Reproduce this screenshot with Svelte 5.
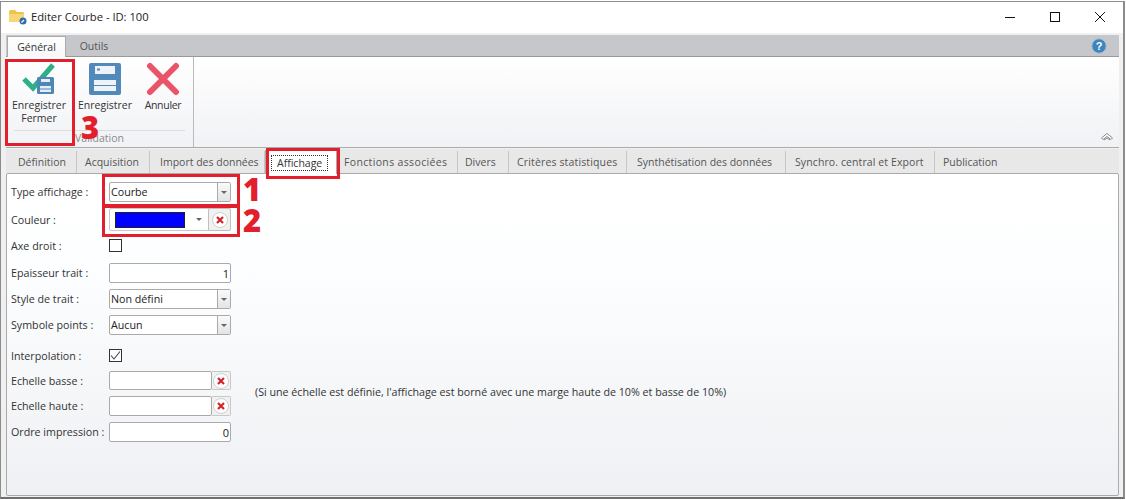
<script>
  // width and pad read off the separators, the text does not sit the same way in every tab
  const tabs = [
    { label: "Définition", width: 71, pad: 12 },
    { label: "Acquisition", width: 73, pad: 8 },
    { label: "Import des données", width: 115, pad: 10 },
    { label: "Affichage", width: 72, pad: 5 },
    { label: "Fonctions associées", width: 121, pad: 7, spacing: 0.35 },
    { label: "Divers", width: 51, pad: 7 },
    { label: "Critères statistiques", width: 118, pad: 8, spacing: 0.15 },
    { label: "Synthétisation des données", width: 159, pad: 10 },
    { label: "Synchro. central et Export", width: 149, pad: 9, spacing: 0.1 },
    { label: "Publication", width: 80, pad: 8 },
  ];
</script>

{#snippet clearIcon()}
  <span class="clear-dot">
    <svg width="10" height="10" viewBox="0 0 10 10"><path d="M2 2 L8 8 M8 2 L2 8" stroke="#d4232b" stroke-width="2.2" /></svg>
  </span>
{/snippet}

<div class="window">
  <header class="titlebar">
    <svg class="folder" width="18" height="16" viewBox="0 0 18 16">
      <path d="M0 3 Q0 1 2 1 H6 L8 3 H14 Q15 3 15 5 V13 H1 Q0 13 0 12 Z" fill="#f0c24a" />
      <path d="M0 5 H15 V13 H1 Q0 13 0 12 Z" fill="#f6d679" />
      <circle cx="14" cy="12" r="3.5" fill="#2f6ea8" />
      <path d="M12.5 13.5 L15 11" stroke="#fff" stroke-width="1.2" />
    </svg>
    <span class="title">Editer Courbe - ID: 100</span>
    <div class="winbtns">
      <svg width="12" height="12" viewBox="0 0 12 12"><path d="M1 6.5 H11" stroke="#111" /></svg>
      <svg width="12" height="12" viewBox="0 0 12 12"><rect x="1.5" y="1.5" width="9" height="9" fill="none" stroke="#111" /></svg>
      <svg width="12" height="12" viewBox="0 0 12 12"><path d="M1 1 L11 11 M11 1 L1 11" stroke="#111" /></svg>
    </div>
  </header>

  <div class="ribbon-tabs">
    <div class="rtab active">Général</div>
    <div class="rtab">Outils</div>
    <svg class="help" width="16" height="16" viewBox="0 0 16 16">
      <circle cx="8" cy="8" r="7.2" fill="#3f83bd" stroke="#9cc0dd" />
      <text x="8" y="12" text-anchor="middle" font-size="11" font-weight="700" fill="#fff" font-family="Liberation Sans, sans-serif">?</text>
    </svg>
  </div>

  <div class="ribbon">
    <div class="group">
      <div class="buttons">
        <div class="rbtn">
          <svg width="34" height="34" viewBox="0 0 34 34">
            <path d="M2 17 L11 26 L31 3" fill="none" stroke="#2eaf85" stroke-width="5" />
            <rect x="15" y="15" width="17" height="17" rx="1.5" fill="#4f86b8" />
            <rect x="19" y="17" width="9" height="3" fill="#e6eef5" />
            <rect x="18" y="24" width="11" height="6" fill="#e6eef5" />
            <path d="M18 27 H29" stroke="#4f86b8" />
          </svg>
          <span>Enregistrer<br />Fermer</span>
        </div>
        <div class="rbtn">
          <svg width="34" height="34" viewBox="0 0 34 34">
            <rect x="1" y="1" width="32" height="32" rx="2" fill="#5189bb" />
            <rect x="7" y="4" width="20" height="8" fill="#eef3f8" />
            <rect x="9" y="6.5" width="3" height="2" fill="#5189bb" />
            <rect x="6" y="18" width="22" height="11" fill="#eef3f8" />
            <path d="M6 23.5 H28" stroke="#5189bb" />
          </svg>
          <span>Enregistrer</span>
        </div>
        <div class="rbtn cancel">
          <svg width="34" height="34" viewBox="0 0 34 34">
            <path d="M4 4 L30 30 M30 4 L4 30" stroke="#ea5468" stroke-width="6" stroke-linecap="round" />
          </svg>
          <span>Annuler</span>
        </div>
      </div>
      <div class="group-label">Validation</div>
    </div>
    <svg class="collapse" width="14" height="10" viewBox="0 0 14 10">
      <path d="M1.5 6 L7 1.5 L12.5 6 L11 7.5 L7 4.5 L3 7.5 Z" fill="#fff" stroke="#888" />
      <path d="M4 8 L7 6 L10 8" fill="none" stroke="#888" />
    </svg>
  </div>

  <nav class="tabs">
    {#each tabs as tab}
      <div
        class="tab"
        class:current={tab.label === "Affichage"}
        style="width: {tab.width}px; padding-left: {tab.pad}px; letter-spacing: {tab.spacing ?? 0}px"
      >
        <span>{tab.label}</span>
      </div>
    {/each}
  </nav>

  <main class="panel">
    <div class="row r-type">
      <label>Type affichage :</label>
      <div class="field combo"><span>Courbe</span><i class="arrow"></i></div>
    </div>
    <div class="row r-color">
      <label>Couleur :</label>
      <div class="field color">
        <div class="swatch"></div>
        <i class="caret"></i>
        <div class="clear">{@render clearIcon()}</div>
      </div>
    </div>
    <div class="row r-axe">
      <label>Axe droit :</label>
      <div class="check"></div>
    </div>
    <div class="row r-thick">
      <label>Epaisseur trait :</label>
      <div class="field num">1</div>
    </div>
    <div class="row r-next">
      <label>Style de trait :</label>
      <div class="field combo"><span>Non défini</span><i class="arrow"></i></div>
    </div>
    <div class="row r-next">
      <label>Symbole points :</label>
      <div class="field combo"><span>Aucun</span><i class="arrow"></i></div>
    </div>
    <div class="row r-interp">
      <label>Interpolation :</label>
      <div class="check">
        <svg width="13" height="13" viewBox="0 0 13 13"><path d="M2 6.5 L5 10 L11 2.5" fill="none" stroke="#444" stroke-width="1.1" /></svg>
      </div>
    </div>
    <div class="scales">
      <div>
        <div class="row r-low">
          <label>Echelle basse :</label>
          <div class="field scale"><div class="input"></div><div class="clear">{@render clearIcon()}</div></div>
        </div>
        <div class="row r-high">
          <label>Echelle haute :</label>
          <div class="field scale"><div class="input"></div><div class="clear">{@render clearIcon()}</div></div>
        </div>
      </div>
      <p class="hint">(Si une échelle est définie, l'affichage est borné avec une marge haute de 10% et basse de 10%)</p>
    </div>
    <div class="row r-next">
      <label>Ordre impression :</label>
      <div class="field num">0</div>
    </div>
  </main>

  <!-- annotations painted over the screenshot -->
  <div class="mark m-save"></div>
  <div class="mark m-tab"></div>
  <div class="mark m-type"></div>
  <div class="mark m-color"></div>
  <span class="num-mark n1">1</span>
  <span class="num-mark n2">2</span>
  <span class="num-mark n3">3</span>
</div>

<style>
  :global(body) {
    margin: 0;
    background: #fff;
  }

  .window {
    position: relative;
    box-sizing: border-box;
    width: 1125px;
    height: 498px;
    margin-top: 1px;
    padding: 0 4px 4px 5px;
    border: 1px solid #8c8c8c;
    border-right: 2px solid #8c8c8c;
    border-bottom: 2px solid #6e6e6e;
    background: #f0f0f0;
    font-family: "Open Sans", sans-serif;
    font-size: 10.5px;
    color: #333;
    overflow: hidden;
  }

  .titlebar {
    display: flex;
    align-items: center;
    box-sizing: border-box;
    height: 31px;
    margin: 0 -4px 0 -5px;
    padding: 0 0 2px 8px;
    background: #fff;
  }

  .folder {
    margin-right: 4px;
  }

  .title {
    font-size: 11.2px;
    color: #222;
  }

  .winbtns {
    display: flex;
    gap: 33px;
    margin-left: auto;
    margin-right: 17px;
  }

  .ribbon-tabs {
    position: relative;
    display: flex;
    align-items: flex-end;
    height: 21px;
    margin-top: 2px;
    background: #c5c7ca;
    border-bottom: 1px solid #999;
  }

  .rtab {
    display: flex;
    align-items: center;
    justify-content: center;
    box-sizing: border-box;
    width: 56px;
    height: 20px;
    color: #555;
  }

  .rtab.active {
    width: 59px;
    height: 21px;
    margin: 0 0 -1px 1px;
    background: linear-gradient(#fff, #f6f7f9);
    border: 1px solid #aaa;
    border-bottom: none;
    color: #333;
  }

  .help {
    position: absolute;
    right: 12px;
    top: 3px;
  }

  .ribbon {
    position: relative;
    display: flex;
    height: 90px;
    background: linear-gradient(#fff, #f1f2f5);
    border-bottom: 1px solid #aaa;
  }

  .group {
    display: flex;
    flex-direction: column;
    width: 187px;
    border-right: 1px solid #bbb;
  }

  .buttons {
    display: flex;
    height: 73px;
    box-sizing: border-box;
    padding-top: 5px;
  }

  .rbtn {
    display: flex;
    flex-direction: column;
    align-items: center;
    width: 66px;
    line-height: 13px;
    text-align: center;
    color: #333;
  }

  .rbtn.cancel {
    width: 50px;
    letter-spacing: -0.3px;
  }

  .rbtn span {
    margin-top: 3px;
  }

  .group-label {
    margin: 0 8px;
    border-top: 1px solid #ddd;
    text-align: center;
    color: #8a8a8a;
  }

  .collapse {
    position: absolute;
    right: 5px;
    bottom: 5px;
  }

  .tabs {
    display: flex;
    align-items: flex-end;
    height: 24px;
    margin-top: 1px;
    background: #e8e8e8;
  }

  .tab {
    display: flex;
    align-items: center;
    flex: none;
    box-sizing: border-box;
    height: 22px;
    border-right: 1px solid #c6c6c6;
    color: #555;
    white-space: nowrap;
  }

  .tab:last-child {
    border-right: none;
  }

  .tab.current {
    position: relative;
    z-index: 1;
    height: 24px;
    margin-bottom: -1px;
    background: #fff;
    border: 1px solid #aaa;
    border-bottom: none;
    color: #333;
  }

  .tab.current span {
    padding: 1px 6px;
    outline: 1px dotted #333;
    outline-offset: -1px;
  }

  .panel {
    box-sizing: border-box;
    height: 323px;
    padding-top: 8px;
    background: linear-gradient(#fff, #fdfeff 30%, #eef0f3);
    border: 1px solid #aaa;
    border-radius: 2px;
    font-size: 10.7px;
  }

  .row {
    display: flex;
    align-items: center;
    height: 20px;
  }

  .row label {
    flex: 0 0 98px;
    padding-left: 4px;
    white-space: nowrap;
    color: #333;
  }

  .r-color {
    height: 23px;
    margin-top: 6px;
  }

  .r-axe {
    height: 13px;
    margin-top: 8px;
  }

  .r-thick {
    margin-top: 11px;
  }

  .r-next {
    margin-top: 6px;
  }

  .r-interp {
    height: 13px;
    margin-top: 14px;
  }

  .scales {
    display: flex;
    align-items: center;
    margin-top: 9px;
  }

  .r-low {
    height: 19px;
  }

  .r-high {
    margin-top: 6px;
  }

  .field {
    box-sizing: border-box;
    display: flex;
    align-items: center;
    flex: none;
    width: 122px;
    height: 100%;
    color: #222;
  }

  .combo,
  .num,
  .input {
    background: #fff;
    border: 1px solid #aaa;
    border-radius: 2px;
  }

  .combo span {
    flex: 1;
    padding-left: 1px;
  }

  .arrow {
    display: flex;
    align-items: center;
    justify-content: center;
    box-sizing: border-box;
    width: 13px;
    height: 100%;
    background: linear-gradient(#fafafa, #e4e4e4);
    border-left: 1px solid #aaa;
  }

  .arrow::after,
  .caret::after {
    content: "";
    border: 3px solid transparent;
    border-top-color: #666;
    border-bottom: none;
  }

  .num {
    justify-content: flex-end;
    padding-right: 1px;
    font-size: 11px;
  }

  .check {
    box-sizing: border-box;
    width: 13px;
    height: 13px;
    background: #fff;
    border: 1px solid #333;
    line-height: 0;
  }

  .check svg {
    margin: -1px;
  }

  .color {
    border: 1px solid #c8c8c8;
    border-radius: 2px;
  }

  .swatch {
    box-sizing: border-box;
    width: 70px;
    height: 16px;
    margin-left: 5px;
    background: #0000ff;
    border: 1px solid #222;
  }

  .caret {
    display: flex;
    width: 8px;
    margin-left: 11px;
  }

  .clear {
    display: flex;
    align-items: center;
    justify-content: center;
    box-sizing: border-box;
    flex: 0 0 23px;
    height: 100%;
    margin-left: auto;
    background: #f1f1f1;
  }

  .color .clear {
    margin-right: -1px;
    height: 23px;
    border: 1px solid #c0c0c0;
    border-radius: 2px;
  }

  .clear-dot {
    display: flex;
    align-items: center;
    justify-content: center;
    box-sizing: border-box;
    width: 16px;
    height: 16px;
    background: #fff;
    border: 1px solid #d0d0d0;
    border-radius: 50%;
  }

  .scale .input {
    box-sizing: border-box;
    flex: 1;
    height: 100%;
  }

  .scale .clear {
    flex-basis: 19px;
    border: 1px solid #c8c8c8;
    border-left: none;
    border-radius: 0 2px 2px 0;
  }

  .hint {
    margin: 0 0 4px 24px;
    color: #333;
    white-space: nowrap;
  }

  .mark {
    position: absolute;
    box-sizing: border-box;
    border: 3px solid #e11f2d;
    pointer-events: none;
    z-index: 2;
  }

  .m-save {
    left: 4px;
    top: 57px;
    width: 70px;
    height: 87px;
  }

  .m-tab {
    left: 265px;
    top: 146px;
    width: 74px;
    height: 31px;
  }

  .m-type {
    left: 101px;
    top: 172px;
    width: 138px;
    height: 34px;
  }

  .m-color {
    left: 101px;
    top: 202px;
    width: 138px;
    height: 33px;
  }

  .num-mark {
    position: absolute;
    z-index: 3;
    font-family: "Open Sans", sans-serif;
    font-weight: 800;
    font-size: 31px;
    line-height: 32px;
    color: #e11f2d;
  }

  .n1 {
    left: 242px;
    top: 171px;
  }

  .n2 {
    left: 242px;
    top: 202px;
  }

  .n3 {
    left: 80px;
    top: 109px;
  }
</style>
